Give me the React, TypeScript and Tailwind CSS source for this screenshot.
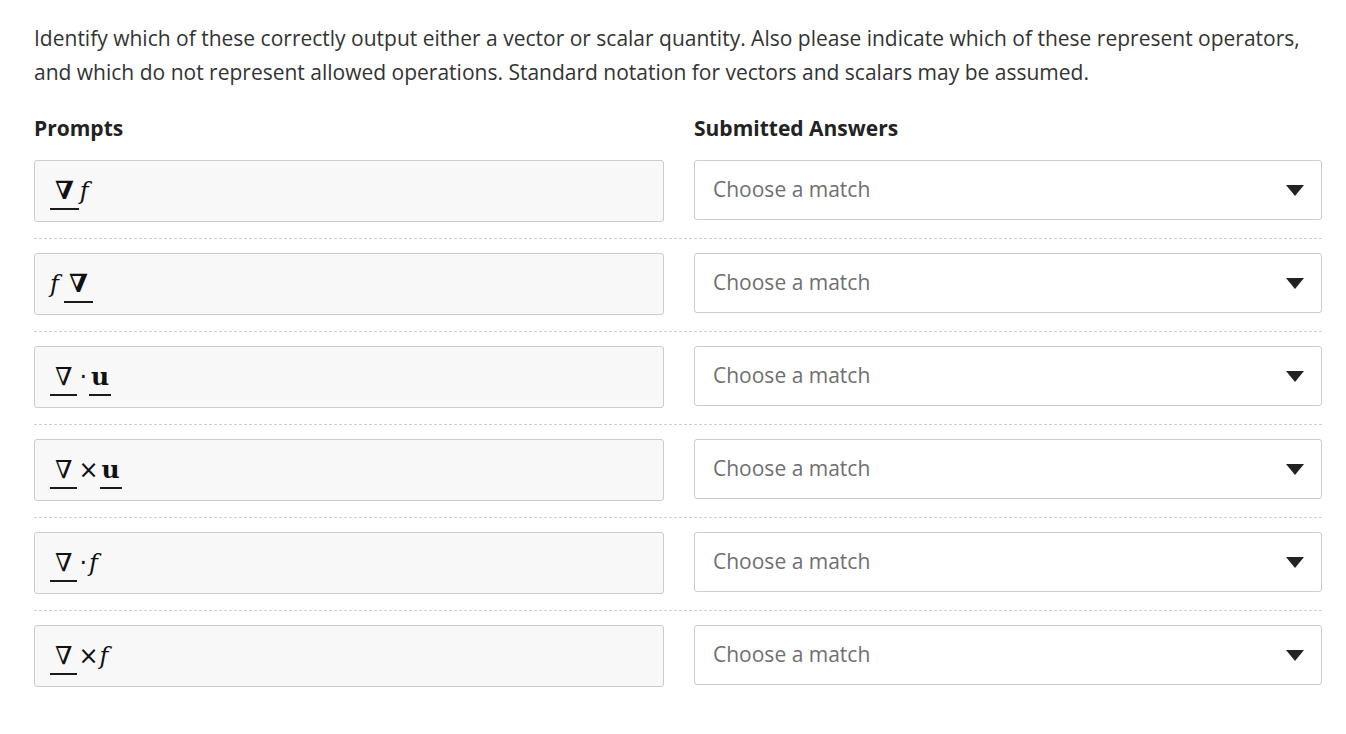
import React from 'react'

type Row = { key: string; expr: React.ReactNode }

// underlined symbol, as the prompt renders vectors/operators
const Ul = ({ children, bold = false, px = 'px-[5px]' }: { children: React.ReactNode; bold?: boolean; px?: string }) => (
  <span className={`inline-block border-b-[2px] border-[#1a1a1a] pb-[3px] ${px} ${bold ? 'font-bold' : ''}`}>
    {children}
  </span>
)

const F = ({ cls = '' }: { cls?: string }) => (
  <span className={`text-[24px] font-light italic ${cls}`} style={{ fontFamily: '"DejaVu Serif", serif' }}>f</span>
)

const Op = ({ children, cls = '' }: { children: React.ReactNode; cls?: string }) => (
  <span className={`text-[24px] ${cls}`} style={{ fontFamily: '"DejaVu Sans", sans-serif' }}>{children}</span>
)

const rows: Row[] = [
  { key: 'gradf', expr: (<><Ul bold>∇</Ul><F cls="ml-[1px]" /></>) },
  { key: 'fgrad', expr: (<><F cls="mr-[5px]" /><Ul bold>∇</Ul></>) },
  { key: 'divu', expr: (<><Ul>∇</Ul><Op cls="mx-[2px]">·</Op><Ul bold px="px-[2px]">u</Ul></>) },
  { key: 'curlu', expr: (<><Ul>∇</Ul><Op cls="mx-[1px]">×</Op><Ul bold px="px-[2px]">u</Ul></>) },
  { key: 'divf', expr: (<><Ul>∇</Ul><Op cls="mx-[2px]">·</Op><F /></>) },
  { key: 'curlf', expr: (<><Ul>∇</Ul><Op cls="mx-[1px]">×</Op><F /></>) },
]

export default function App() {
  return (
    <div className="min-h-screen bg-white pt-[21px] pl-[34px] pr-[24px] text-[#333]" style={{ fontFamily: '"Open Sans", sans-serif' }}>
      <p className="text-[21px] leading-[34px]">
        Identify which of these correctly output either a vector or scalar quantity. Also please indicate which of these represent operators, and which do not represent allowed operations. Standard notation for vectors and scalars may be assumed.
      </p>
      <div className="mt-[25px] grid grid-cols-[630px_628px] gap-x-[30px]">
        <h3 className="text-[21px] font-bold leading-[28px] text-[#222]">Prompts</h3>
        <h3 className="text-[21px] font-bold leading-[28px] text-[#222]">Submitted Answers</h3>
      </div>
      <div className="mt-[18px] flex flex-col">
        {rows.map((r, i) => (
          <div
            key={r.key}
            className={`grid grid-cols-[630px_628px] gap-x-[30px] ${i < rows.length - 1 ? 'border-b border-dashed border-[#cfcfcf] pb-[16px] mb-[14px]' : ''}`}
          >
            <div className="flex h-[62px] items-center rounded-[3px] border border-[#cccccc] bg-[#f8f8f8] pl-[15px] pt-[4px] text-[25px] leading-[28px] text-[#111]" style={{ fontFamily: '"DejaVu Serif", serif' }}>
              <span className="flex items-baseline">{r.expr}</span>
            </div>
            <div className="flex h-[60px] items-center justify-between rounded-[3px] border border-[#cccccc] bg-white pl-[18px] pr-[17px]">
              <span className="text-[21px] text-[#6f6f6f]">Choose a match</span>
              <svg width="18" height="11" viewBox="0 0 18 11" className="mt-[1px]">
                <polygon points="0,0 18,0 9,11" fill="#222" />
              </svg>
            </div>
          </div>
        ))}
      </div>
    </div>
  )
}
